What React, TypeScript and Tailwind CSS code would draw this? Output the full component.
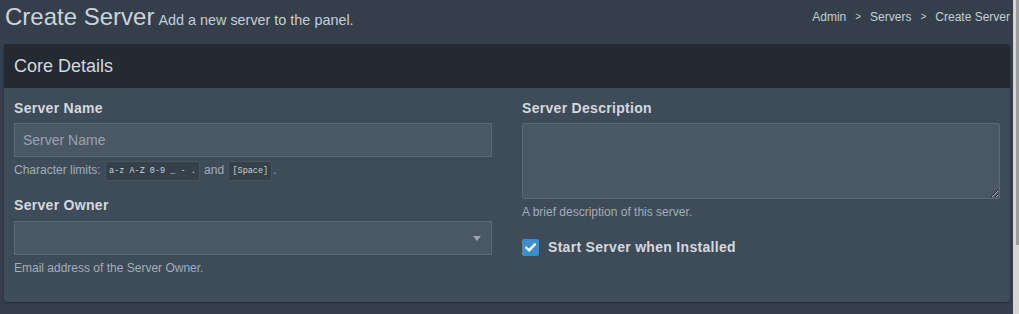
import React from 'react'

const SANS = { fontFamily: '"Liberation Sans", Arial, sans-serif' }

function Label({ children }: { children: React.ReactNode }) {
  return <label className="block text-[14px] leading-[20px] font-bold text-[#d3d9df] tracking-[0.3px]">{children}</label>
}

function Help({ children }: { children: React.ReactNode }) {
  return <p className="mt-[6px] text-[12px] leading-[14px] text-[#a2adb8]">{children}</p>
}

function Chip({ children }: { children: React.ReactNode }) {
  return (
    <code className="mx-[1px] inline-block rounded-[2px] border border-[#48535e] bg-[#35404b] px-[3px] py-[4px] align-middle font-['Liberation_Mono',monospace] text-[8.5px] leading-[10px] text-[#c9d0d7]">
      {children}
    </code>
  )
}

export default function App() {
  return (
    <div className="flex h-[314px] w-full overflow-hidden bg-[#343f4b]" style={SANS}>
      <main className="min-w-0 flex-1">
        {/* page header */}
        <div className="flex h-[44px] items-start justify-between pl-[5px] pr-[3px]">
          <h1 className="mt-[3px] flex items-baseline gap-[4px] text-[24px] leading-[28px] text-[#cbd3db]">
            Create Server
            <small className="text-[14.4px] text-[#c6ced6]">Add a new server to the panel.</small>
          </h1>
          <ol className="mt-[10px] flex items-center gap-[9px] text-[12px] leading-[14px] text-[#c6ced6]">
            <li>Admin</li>
            <li className="text-[10px]">&gt;</li>
            <li>Servers</li>
            <li className="text-[10px]">&gt;</li>
            <li>Create Server</li>
          </ol>
        </div>

        {/* box */}
        <section className="ml-[4px] mr-[3px] overflow-hidden rounded-[3px] bg-[#3e4b58] shadow-[0_1px_2px_rgba(0,0,0,0.35)]">
          <div className="flex h-[44px] items-center bg-[#232a31] px-[10px]">
            <h3 className="text-[18px] leading-[20px] text-[#d3d9df]">Core Details</h3>
          </div>
          <div className="grid h-[214px] grid-cols-2 gap-[30px] px-[10px] pt-[10px]">
            {/* left */}
            <div>
              <Label>Server Name</Label>
              <input
                placeholder="Server Name"
                className="mt-[5px] block h-[34px] w-full border border-[#5b6977] bg-[#4a5866] px-[8px] text-[14px] text-[#d3d9df] outline-none placeholder:text-[#98a3ae]"
              />
              <p className="mt-[4px] text-[12px] leading-[19px] text-[#a2adb8]">
                Character limits: <Chip>a-z A-Z 0-9 _ - .</Chip> and <Chip>[Space]</Chip>.
              </p>
              <div className="mt-[14px]">
                <Label>Server Owner</Label>
                <div className="relative mt-[6px] h-[34px] w-full border border-[#5b6977] bg-[#4a5866]">
                  <span className="absolute right-[10px] top-[14px] h-0 w-0 border-x-[4px] border-t-[5px] border-x-transparent border-t-[#9aa4ae]" />
                </div>
                <Help>Email address of the Server Owner.</Help>
              </div>
            </div>

            {/* right */}
            <div>
              <Label>Server Description</Label>
              <textarea className="mt-[5px] block h-[76px] w-full resize-y rounded-[2px] border border-[#5b6977] bg-[#4a5866] px-[8px] text-[14px] text-[#d3d9df] outline-none" />
              <Help>A brief description of this server.</Help>
              <div className="mt-[18px] flex items-center gap-[9px]">
                <span className="flex h-[17px] w-[17px] items-center justify-center rounded-[2px] bg-[#3c8dcc]">
                  <svg width="11" height="9" viewBox="0 0 11 9">
                    <path d="M1.2 4.6 L4.2 7.4 L9.8 1.4" fill="none" stroke="#fff" strokeWidth="2.4" strokeLinecap="round" strokeLinejoin="round" />
                  </svg>
                </span>
                <span className="text-[14px] leading-[20px] font-bold text-[#d3d9df] tracking-[0.3px]">Start Server when Installed</span>
              </div>
            </div>
          </div>
        </section>
      </main>

      {/* scrollbar */}
      <div className="flex w-[6px] shrink-0 bg-[#d6d6d6]">
        <div className="ml-auto h-[245px] w-[3px] bg-[#9c9c9c]" />
      </div>
    </div>
  )
}
